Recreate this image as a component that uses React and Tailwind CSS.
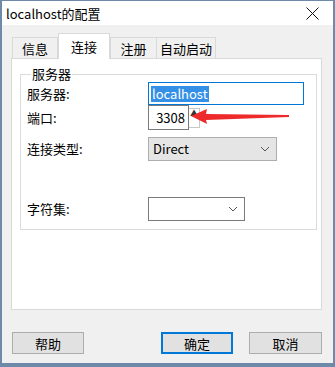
import { useState } from "react";

const font = "font-['Noto_Sans_CJK_SC','Noto_Sans',sans-serif]";

const tabs = [
  { label: "信息", w: "w-[46px]" },
  { label: "连接", w: "w-[52px]" },
  { label: "注册", w: "w-[46px]" },
  { label: "自动启动", w: "w-[60px]" },
];

const Chevron = () => (
  <svg width="10" height="6" viewBox="0 0 10 6" className="shrink-0">
    <path d="M1 1 L5 5 L9 1" fill="none" stroke="#555" strokeWidth="1" />
  </svg>
);

const App = () => {
  const [active] = useState(1);

  return (
    <div
      className={`${font} w-[335px] h-[367px] flex flex-col border-t border-l-2 border-r-2 border-b-4 border-[#6d8aa8] text-[12px] text-black bg-[#f0f0f0]`}
    >
      {/* Title bar */}
      <div className="h-[24px] bg-white flex items-center justify-between pl-[4px] pr-[14px]">
        <span className="leading-none text-[13px]">localhost的配置</span>
        <svg width="13" height="13" viewBox="0 0 13 13">
          <path d="M0.5 0.5 L12.5 12.5 M12.5 0.5 L0.5 12.5" stroke="#111" strokeWidth="1" />
        </svg>
      </div>

      {/* Body */}
      <div className="flex-1 flex flex-col pl-[9px] pr-[11px]">
        {/* Tabs */}
        <div className="mt-[8px] flex items-end h-[25px] pl-[1px]">
          {tabs.map((t, i) =>
            i === active ? (
              <div
                key={t.label}
                className={`${t.w} h-[26px] -mb-[1px] z-10 flex items-center justify-center bg-white border border-b-0 border-[#d9d9d9] leading-none text-[13px] whitespace-nowrap`}
              >
                {t.label}
              </div>
            ) : (
              <div
                key={t.label}
                className={`${t.w} h-[21px] flex items-center justify-center bg-[#f0f0f0] border border-b-0 border-[#d9d9d9] leading-none text-[13px] whitespace-nowrap ${
                  i === 2 ? "border-r-0" : ""
                }`}
              >
                {t.label}
              </div>
            )
          )}
        </div>

        {/* Tab panel */}
        <div className="h-[252px] bg-white border border-[#d9d9d9] px-[8px] pt-[7px]">
          <fieldset className="border border-[#dcdcdc] pl-[6px] pr-[12px] pb-[8px]">
            <legend className="ml-[4px] px-[1px] leading-[16px] text-[13px]">服务器</legend>

            {/* 服务器 */}
            <div className="flex items-center h-[23px]">
              <span className="w-[121px] text-[13px]">服务器:</span>
              <div className="h-[23px] w-[156px] border border-[#0078d7] flex items-center pl-[2px]">
                <span className="bg-[#3390e6] text-white leading-[16px] px-[1px] text-[13px]">localhost</span>
              </div>
            </div>

            {/* 端口 */}
            <div className="relative flex items-center h-[25px]">
              <span className="w-[121px] text-[13px]">端口:</span>
              <div className="h-[25px] w-[41px] border border-[#7a7a7a] flex items-center justify-end pr-[3px] text-[13px]">
                3308
              </div>
              <div className="h-[20px] w-[11px] flex flex-col items-center justify-start text-[8px] leading-none text-[#333] border border-[#c8c8c8] border-l-0">
                ▲
              </div>
              <svg
                className="absolute left-[164px] top-[4px]"
                width="98"
                height="16"
                viewBox="0 0 98 16"
              >
                <polygon
                  points="0,7 16,0 15,5 98,6 98,8 15,11 16,15"
                  fill="#ee2a2a"
                />
              </svg>
            </div>

            {/* 连接类型 */}
            <div className="flex items-center h-[24px] mt-[7px]">
              <span className="w-[121px] text-[13px]">连接类型:</span>
              <div className="h-[24px] w-[129px] bg-[#e5e5e5] border border-[#adadad] flex items-center justify-between pl-[4px] pr-[6px]">
                <span className="text-[13px]">Direct</span>
                <Chevron />
              </div>
            </div>

            {/* 字符集 */}
            <div className="flex items-center h-[24px] mt-[36px]">
              <span className="w-[121px] text-[13px]">字符集:</span>
              <div className="h-[24px] w-[97px] bg-white border border-[#7a7a7a] flex items-center justify-end pr-[6px]">
                <Chevron />
              </div>
            </div>
          </fieldset>
        </div>

        {/* Buttons */}
        <div className="mt-[22px] flex items-center pl-[1px]">
          <button className="h-[22px] w-[72px] bg-[#e1e1e1] border border-[#adadad] text-[13px] leading-none">
            帮助
          </button>
          <div className="flex-1" />
          <button className="h-[22px] w-[72px] bg-[#e1e1e1] border-2 border-[#0078d7] text-[13px] leading-none">
            确定
          </button>
          <button className="ml-[16px] h-[22px] w-[73px] bg-[#e1e1e1] border border-[#adadad] text-[13px] leading-none">
            取消
          </button>
        </div>
      </div>
    </div>
  );
};

export default App;
